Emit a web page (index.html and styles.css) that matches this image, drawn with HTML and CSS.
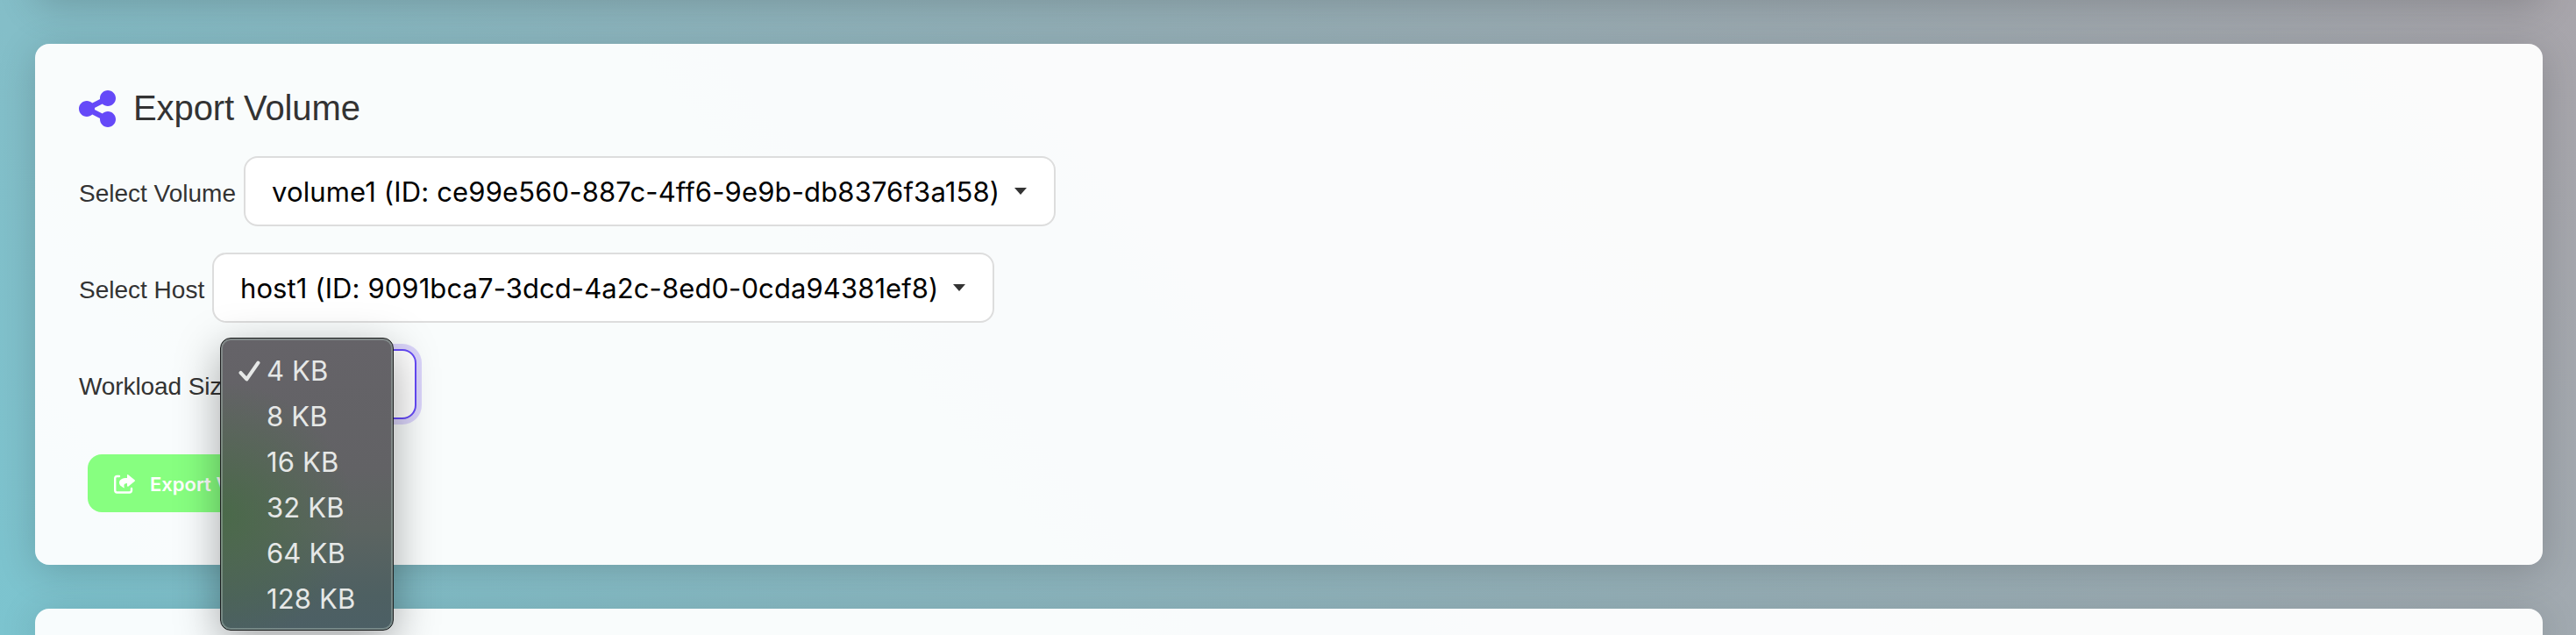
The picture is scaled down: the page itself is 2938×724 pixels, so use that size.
FILE: index.html
```html
<!DOCTYPE html>
<html lang="en">
<head>
<meta charset="utf-8">
<title>Export Volume</title>
<link rel="stylesheet" href="styles.css">
</head>
<body>
<main class="page">
  <section class="card card-prev"></section>
  <section class="card card-export">
    <h2 class="title">
      <svg class="title-icon" viewBox="0 0 448 448" aria-hidden="true"><path d="M352 192c53 0 96-43 96-96S405 0 352 0s-96 43-96 96c0 4 .2 8 .7 11.900l-94.100 47C145.400 138.200 121.900 128 96 128c-53 0-96 43-96 96s43 96 96 96c25.900 0 49.400-10.200 66.600-26.900l94.100 47c-.5 3.900-.7 7.800-.7 11.900 0 53 43 96 96 96s96-43 96-96-43-96-96-96c-25.900 0-49.400 10.200-66.600 26.900l-94.100-47c.5-3.900 .7-7.800 .7-11.900s-.2-8-.7-11.900l94.100-47C302.600 181.800 326.100 192 352 192z"/></svg>
      <span class="title-text">Export Volume</span>
    </h2>
    <div class="field"><span class="label label-volume">Select Volume</span><div class="select"><span class="value value-volume">volume1 (ID: ce99e560-887c-4ff6-9e9b-db8376f3a158)</span><i class="caret"></i></div></div>
    <div class="field"><span class="label label-host">Select Host</span><div class="select select-host"><span class="value value-host">host1 (ID: 9091bca7-3dcd-4a2c-8ed0-0cda94381ef8)</span><i class="caret"></i></div></div>
    <div class="field"><span class="label label-size">Workload Size</span>
      <div class="select select-size">
        <ul class="menu">
          <li><svg class="check" viewBox="0 0 24 24" aria-hidden="true"><path d="M2.500 13.500 9 20.500 21.500 2.500"/></svg>4 KB</li>
          <li>8 KB</li>
          <li>16 KB</li>
          <li>32 KB</li>
          <li>64 KB</li>
          <li>128 KB</li>
        </ul>
      </div>
    </div>
    <button class="button" type="button">
      <svg class="button-icon" viewBox="0 0 24 22" aria-hidden="true"><path class="frame" d="M6 2H3.500Q1.200 2 1.200 4.500V18Q1.200 20.500 3.500 20.500H17.500Q20 20.500 20 18V16"/><path class="arrow" d="M15 0.300Q15.600-.3 16.500 .4L23.600 6.300Q24.300 7 23.600 7.700L16.500 13.600Q15 14.300 15 12.500V10C11.500 10 10.700 12 12 15.500 8.500 14 6 12.300 6 9.300 6 6 9 4 15 4Z"/></svg>
      <span>Export Volume</span>
    </button>
  </section>
  <section class="card card-next"></section>
</main>
</body>
</html>
```
FILE: styles.css
```css
* { box-sizing: border-box; }
html, body { margin: 0; height: 724px; overflow: hidden; }
body {
  font-family: "Liberation Sans", Arial, sans-serif;
  color: #333;
  background: linear-gradient(50deg, #7cc4cf 0%, #94b2ba 50%, #a8a5ab 100%);
}
.page { display: flex; flex-direction: column; gap: 50px; padding: 0 38px 0 40px; height: 724px; }
.card {
  flex: none;
  border-radius: 16px;
  background: rgba(255, 255, 255, .95);
  box-shadow: 0 8px 44px rgba(0, 0, 0, .17);
}
.card-prev { height: 200px; margin-top: -200px; }
.card-export { height: 594px; padding: 50px; }
.card-next { height: 30px; border-radius: 16px 16px 0 0; }
.title { display: flex; align-items: center; gap: 20px; height: 46px; margin: 0 0 32px; padding-top: 2px; font-size: 40px; font-weight: 400; }
.title-text { margin-top: -2px; letter-spacing: -.1px; }
.title-icon { width: 42px; height: 42px; fill: #6549f8; }
.field { display: flex; align-items: center; height: 80px; margin-bottom: 30px; }
.label { flex: none; font-size: 28px; padding-top: 5px; white-space: nowrap; }
.label-volume { width: 188px; }
.label-host { width: 152px; }
.label-size { width: 182px; letter-spacing: -.1px; }
.select {
  position: relative;
  display: flex;
  align-items: center;
  justify-content: space-between;
  width: 926px;
  height: 80px;
  padding: 0 31px 0 30px;
  border: 2px solid #ddd;
  border-radius: 16px;
  background: #fff;
}
.select-host { width: 892px; }
.value { padding-top: 1px; font-family: Inter, sans-serif; font-size: 31px; color: #000; white-space: nowrap; }
.value-volume { letter-spacing: .14px; }
.value-host { letter-spacing: .09px; }
.caret { width: 14px; height: 8px; background: #333; clip-path: polygon(0 0, 100% 0, 50% 100%); }
.select-size { width: 203px; border-color: #6549f8; box-shadow: 0 0 0 6px #dad4fa; }
.menu {
  position: absolute;
  left: -23px;
  top: -15px;
  z-index: 2;
  width: 198px;
  height: 334px;
  margin: 0;
  padding: 11px 0;
  list-style: none;
  border: 1px solid #1c1e1e;
  border-radius: 12px;
  background:
    radial-gradient(ellipse 150px 150px at 0 200px, rgba(73, 106, 72, .95), rgba(73, 106, 72, 0)),
    linear-gradient(#656368 0%, #626265 45%, #5c6461 65%, #4e6062 88%, #4c5f65 100%);
  box-shadow: inset 0 0 0 2px rgba(160, 175, 170, .5), 0 14px 50px rgba(0, 0, 0, .35);
  font-family: Inter, sans-serif;
  font-size: 31px;
  letter-spacing: .15px;
  color: #e6e8e7;
}
.menu li { position: relative; height: 52px; padding-left: 52px; line-height: 52px; white-space: nowrap; }
.check { position: absolute; left: 20px; top: 14px; width: 25px; height: 25px; fill: none; stroke: #e6e8e7; stroke-width: 4; stroke-linecap: round; stroke-linejoin: round; }
.button {
  display: flex;
  align-items: center;
  gap: 17px;
  width: 270px;
  height: 66px;
  margin: 40px 10px 0;
  padding: 2px 30px 0;
  border: 0;
  border-radius: 16px;
  background: #87ff80;
  color: #fff;
  font: 600 22px Inter, sans-serif;
  white-space: nowrap;
}
.button-icon { width: 24px; height: 22px; }
.frame { fill: none; stroke: #fff; stroke-width: 2.400; stroke-linecap: round; }
.arrow { fill: #fff; }
```
